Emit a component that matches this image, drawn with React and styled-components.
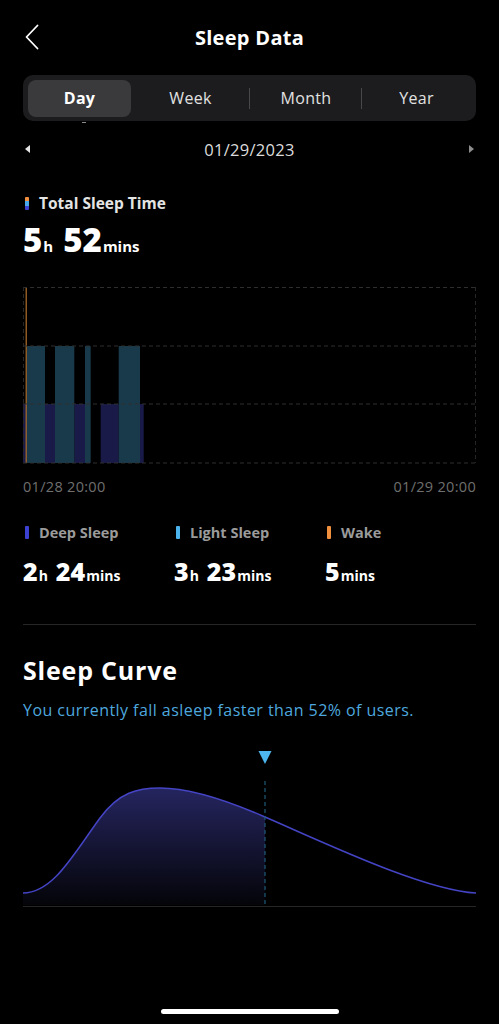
import React from "react";
import styled, { createGlobalStyle } from "styled-components";

const GlobalStyle = createGlobalStyle`
  html, body {
    margin: 0;
    padding: 0;
    background: #000;
  }
  body {
    font-family: "Open Sans", Lato, sans-serif;
    color: #fff;
  }
`;

const Page = styled.div`
  width: 499px;
  min-height: 1024px;
  display: flex;
  flex-direction: column;
  box-sizing: border-box;
  padding: 0 23px 10px;
  background: #000;
`;

const Header = styled.div`
  height: 74px;
  display: grid;
  grid-template-columns: 40px 1fr 40px;
  align-items: center;
  h1 {
    margin: 0;
    text-align: center;
    font-size: 20px;
    letter-spacing: 0.3px;
    font-weight: 700;
    color: #fff;
  }
  svg {
    margin-left: 2px;
  }
`;

const Segmented = styled.div`
  margin-top: 1px;
  height: 46px;
  border-radius: 10px;
  background: #1c1c1e;
  display: grid;
  grid-template-columns: 103px 119px 112px 1fr;
  align-items: center;
  padding: 0 5px;
  box-sizing: border-box;
  position: relative;
`;

const Segment = styled.div`
  height: 37px;
  display: flex;
  align-items: center;
  justify-content: center;
  font-size: 16px;
  letter-spacing: 0.3px;
  font-weight: ${(p) => (p.active ? 700 : 400)};
  color: ${(p) => (p.active ? "#fff" : "#e2e2e2")};
  background: ${(p) => (p.active ? "#3a3a3c" : "transparent")};
  border-radius: 8px;
  position: relative;
  ${(p) =>
    p.divider &&
    `
    &::before {
      content: "";
      position: absolute;
      left: -1px;
      top: 8px;
      bottom: 8px;
      width: 1px;
      background: #48484a;
    }
  `}
`;

const Tick = styled.div`
  position: absolute;
  left: 59px;
  bottom: -2px;
  width: 4px;
  height: 1px;
  background: #8a8a8a;
`;

const DateRow = styled.div`
  height: 56px;
  display: flex;
  align-items: center;
  justify-content: space-between;
  padding: 0 2px 0 2px;
  span {
    font-size: 16.5px;
    letter-spacing: 0.3px;
    color: #dcdcdc;
  }
`;

const Arrow = styled.div`
  width: 0;
  height: 0;
  border-top: 4.5px solid transparent;
  border-bottom: 4.5px solid transparent;
  ${(p) =>
    p.left
      ? "border-right: 5px solid #e6e6e6;"
      : "border-left: 5px solid #8e8e8e;"}
`;

const Label = styled.div`
  display: flex;
  align-items: center;
  gap: 10px;
  height: 18px;
  font-size: ${(p) => p.size || 15}px;
  font-weight: 700;
  color: ${(p) => p.color || "#e4e4e4"};
  margin-top: ${(p) => p.mt || 0}px;
`;

const Swatch = styled.div`
  width: 4px;
  height: 13px;
  border-radius: 1px;
  background: ${(p) => p.bg};
  margin-left: 2px;
`;

const Value = styled.div`
  font-weight: 700;
  color: #fff;
  font-size: ${(p) => p.size}px;
  line-height: ${(p) => p.lh}px;
  height: ${(p) => p.lh}px;
  margin-top: ${(p) => p.mt}px;
  white-space: nowrap;
  b,
  small,
  span {
    line-height: 1;
  }
  small {
    font-size: ${(p) => p.unit}px;
    margin-left: 1px;
  }
  .gap {
    display: inline-block;
    width: ${(p) => Math.round(p.size * 0.3)}px;
  }
`;

const ChartBox = styled.div`
  margin-top: 27px;
  height: 177px;
  svg {
    display: block;
  }
`;

const AxisRow = styled.div`
  margin-top: 14px;
  display: flex;
  justify-content: space-between;
  font-size: 14.5px;
  letter-spacing: 0.3px;
  line-height: 18px;
  color: #6f6f6f;
`;

const Stats = styled.div`
  margin-top: 27px;
  display: grid;
  grid-template-columns: 151px 151px 1fr;
`;

const Divider = styled.div`
  margin-top: 37px;
  height: 1px;
  background: #262626;
`;

const SectionTitle = styled.h2`
  margin: 30px 0 0;
  font-size: 25px;
  letter-spacing: 0.8px;
  line-height: 30px;
  font-weight: 700;
  color: #fff;
`;

const Subtitle = styled.p`
  margin: 15px 0 0;
  font-size: 16px;
  letter-spacing: 0.45px;
  line-height: 20px;
  color: #4ea8df;
`;

const CurveBox = styled.div`
  margin-top: 25px;
  height: 165px;
  svg {
    display: block;
  }
`;

const HomeBar = styled.div`
  margin: auto auto 0;
  width: 178px;
  height: 5px;
  border-radius: 3px;
  background: #fff;
`;

const light = [
  [3.7, 22],
  [32, 51.3],
  [62, 67.7],
  [95.7, 117],
];
const deep = [
  [0, 3.7],
  [22, 32],
  [51.3, 62],
  [77.7, 95.7],
  [117, 120.7],
];

const SleepChart = () => (
  <svg width="453" height="177" viewBox="0 0 453 177">
    {deep.map(([a, b], i) => (
      <rect key={"d" + i} x={a} y={117} width={b - a} height={59} fill="#1a1a48" />
    ))}
    {light.map(([a, b], i) => (
      <rect key={"l" + i} x={a} y={59} width={b - a} height={117} fill="#183a4b" />
    ))}
    <rect x="2.6" y="0" width="1.2" height="176" fill="#b0702c" />
    {[0.5, 59, 117, 176].map((y) => (
      <line key={y} x1="0" x2="453" y1={y} y2={y} stroke="#2e2e2e" strokeWidth="1" strokeDasharray="4 3" />
    ))}
    <line x1="0.5" x2="0.5" y1="0" y2="176" stroke="#262626" strokeDasharray="4 3" />
    <line x1="452.5" x2="452.5" y1="0" y2="176" stroke="#262626" strokeDasharray="4 3" />
  </svg>
);

const curve =
  "M0,148 C30,148 50,110 77,73 C96,47 115,43 137,43 C170,43 210,58 242,72 C300,97 400,145 453,148";
const fill =
  "M0,148 C30,148 50,110 77,73 C96,47 115,43 137,43 C170,43 210,58 242,72 L242,160 L0,160 Z";

const SleepCurve = () => (
  <svg width="453" height="165" viewBox="0 0 453 165">
    <defs>
      <linearGradient id="curveFill" x1="0" y1="43" x2="0" y2="160" gradientUnits="userSpaceOnUse">
        <stop offset="0" stopColor="#25255f" />
        <stop offset="1" stopColor="#040409" />
      </linearGradient>
    </defs>
    <path d={fill} fill="url(#curveFill)" />
    <path d={curve} fill="none" stroke="#4444c4" strokeWidth="1.5" />
    <line x1="242" x2="242" y1="36" y2="161" stroke="#1f5a78" strokeWidth="1.2" strokeDasharray="4 3" />
    <line x1="0" x2="453" y1="161.5" y2="161.5" stroke="#262626" strokeWidth="1" />
    <polygon points="235.5,6 248.5,6 242,19" fill="#4db6ee" />
  </svg>
);

const Stat = ({ color, label, children }) => (
  <div>
    <Label color="#9b9b9b" size={14.5}>
      <Swatch bg={color} />
      {label}
    </Label>
    <Value size={25} unit={14} lh={32} mt={14}>
      {children}
    </Value>
  </div>
);

export default function App() {
  return (
    <Page>
      <GlobalStyle />
      <Header>
        <svg width="14" height="26" viewBox="0 0 14 26">
          <path d="M12.5 1.5 L1.5 13 L12.5 24.5" fill="none" stroke="#fff" strokeWidth="1.8" strokeLinecap="round" strokeLinejoin="round" />
        </svg>
        <h1>Sleep Data</h1>
        <div />
      </Header>

      <Segmented>
        <Segment active>Day</Segment>
        <Segment>Week</Segment>
        <Segment divider>Month</Segment>
        <Segment divider>Year</Segment>
        <Tick />
      </Segmented>

      <DateRow>
        <Arrow left />
        <span>01/29/2023</span>
        <Arrow />
      </DateRow>

      <Label mt={17} size={15.5}>
        <Swatch bg="linear-gradient(#f0903e 0 33%, #49a8ea 33% 66%, #3b42d2 66%)" />
        Total Sleep Time
      </Label>
      <Value size={33} unit={15} lh={40} mt={8}>
        <b>5</b>
        <small>h</small>
        <span className="gap" />
        <b>52</b>
        <small>mins</small>
      </Value>

      <ChartBox>
        <SleepChart />
      </ChartBox>
      <AxisRow>
        <span>01/28 20:00</span>
        <span>01/29 20:00</span>
      </AxisRow>

      <Stats>
        <Stat color="#3b42d2" label="Deep Sleep">
          <b>2</b>
          <small>h</small>
          <span className="gap" />
          <b>24</b>
          <small>mins</small>
        </Stat>
        <Stat color="#4ab3ec" label="Light Sleep">
          <b>3</b>
          <small>h</small>
          <span className="gap" />
          <b>23</b>
          <small>mins</small>
        </Stat>
        <Stat color="#f0903e" label="Wake">
          <b>5</b>
          <small>mins</small>
        </Stat>
      </Stats>

      <Divider />

      <SectionTitle>Sleep Curve</SectionTitle>
      <Subtitle>You currently fall asleep faster than 52% of users.</Subtitle>

      <CurveBox>
        <SleepCurve />
      </CurveBox>

      <HomeBar />
    </Page>
  );
}
